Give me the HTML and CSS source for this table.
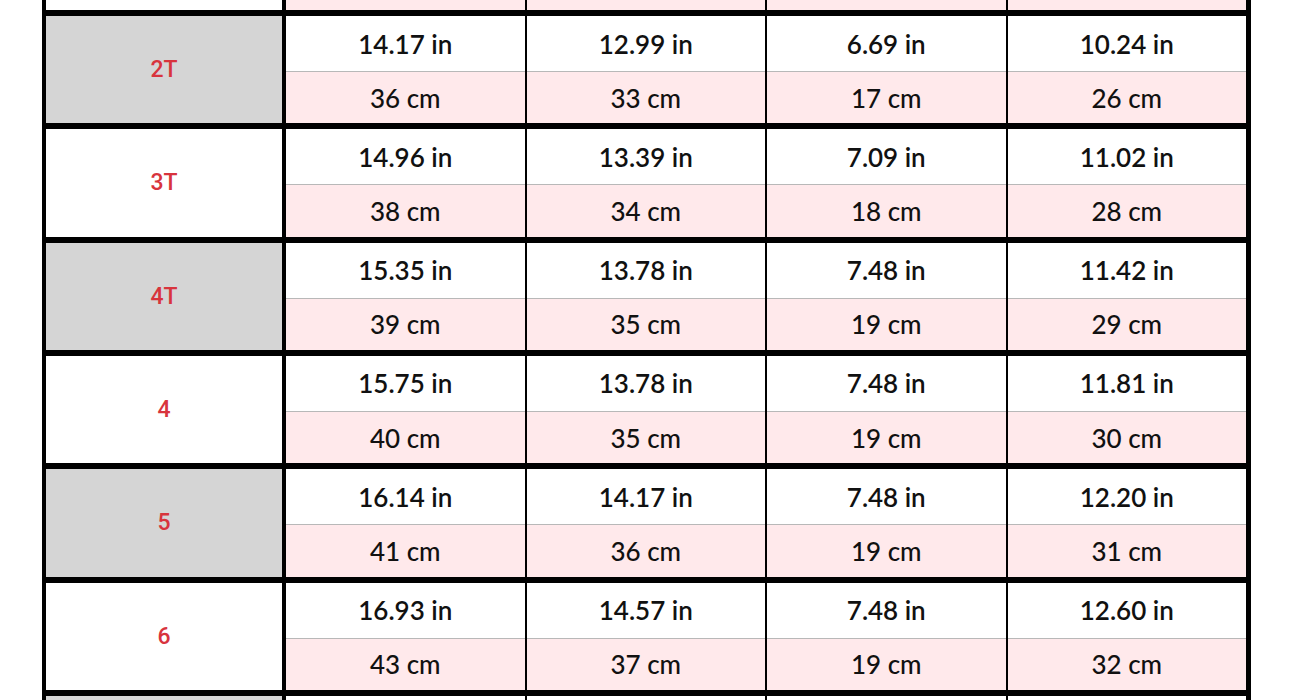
FILE: index.html
```html
<!DOCTYPE html>
<html lang="en">
<head>
<meta charset="utf-8">
<title>Size chart</title>
<link rel="stylesheet" href="styles.css">
</head>
<body>
<div class="chart">
  <div class="row">
    <div class="label"></div>
    <div class="data">
      <div class="cell"><div class="in"></div><div class="cm"></div></div>
      <div class="cell"><div class="in"></div><div class="cm"></div></div>
      <div class="cell"><div class="in"></div><div class="cm"></div></div>
      <div class="cell"><div class="in"></div><div class="cm"></div></div>
    </div>
  </div>
  <div class="row">
    <div class="label alt">2T</div>
    <div class="data">
      <div class="cell"><div class="in">14.17 in</div><div class="cm">36 cm</div></div>
      <div class="cell"><div class="in">12.99 in</div><div class="cm">33 cm</div></div>
      <div class="cell"><div class="in">6.69 in</div><div class="cm">17 cm</div></div>
      <div class="cell"><div class="in">10.24 in</div><div class="cm">26 cm</div></div>
    </div>
  </div>
  <div class="row">
    <div class="label">3T</div>
    <div class="data">
      <div class="cell"><div class="in">14.96 in</div><div class="cm">38 cm</div></div>
      <div class="cell"><div class="in">13.39 in</div><div class="cm">34 cm</div></div>
      <div class="cell"><div class="in">7.09 in</div><div class="cm">18 cm</div></div>
      <div class="cell"><div class="in">11.02 in</div><div class="cm">28 cm</div></div>
    </div>
  </div>
  <div class="row">
    <div class="label alt">4T</div>
    <div class="data">
      <div class="cell"><div class="in">15.35 in</div><div class="cm">39 cm</div></div>
      <div class="cell"><div class="in">13.78 in</div><div class="cm">35 cm</div></div>
      <div class="cell"><div class="in">7.48 in</div><div class="cm">19 cm</div></div>
      <div class="cell"><div class="in">11.42 in</div><div class="cm">29 cm</div></div>
    </div>
  </div>
  <div class="row">
    <div class="label">4</div>
    <div class="data">
      <div class="cell"><div class="in">15.75 in</div><div class="cm">40 cm</div></div>
      <div class="cell"><div class="in">13.78 in</div><div class="cm">35 cm</div></div>
      <div class="cell"><div class="in">7.48 in</div><div class="cm">19 cm</div></div>
      <div class="cell"><div class="in">11.81 in</div><div class="cm">30 cm</div></div>
    </div>
  </div>
  <div class="row">
    <div class="label alt">5</div>
    <div class="data">
      <div class="cell"><div class="in">16.14 in</div><div class="cm">41 cm</div></div>
      <div class="cell"><div class="in">14.17 in</div><div class="cm">36 cm</div></div>
      <div class="cell"><div class="in">7.48 in</div><div class="cm">19 cm</div></div>
      <div class="cell"><div class="in">12.20 in</div><div class="cm">31 cm</div></div>
    </div>
  </div>
  <div class="row">
    <div class="label">6</div>
    <div class="data">
      <div class="cell"><div class="in">16.93 in</div><div class="cm">43 cm</div></div>
      <div class="cell"><div class="in">14.57 in</div><div class="cm">37 cm</div></div>
      <div class="cell"><div class="in">7.48 in</div><div class="cm">19 cm</div></div>
      <div class="cell"><div class="in">12.60 in</div><div class="cm">32 cm</div></div>
    </div>
  </div>
  <div class="row">
    <div class="label alt"></div>
    <div class="data">
      <div class="cell"><div class="in"></div><div class="cm"></div></div>
      <div class="cell"><div class="in"></div><div class="cm"></div></div>
      <div class="cell"><div class="in"></div><div class="cm"></div></div>
      <div class="cell"><div class="in"></div><div class="cm"></div></div>
    </div>
  </div>
</div>
</body>
</html>
```
FILE: styles.css
```css
html, body {
  margin: 0;
  padding: 0;
  background: #fff;
  overflow: hidden;
}
body {
  height: 700px;
}
.chart {
  width: 1200px;
  margin: -97.33px 0 0 42px;
  padding: 0 5px 0 4px;
  background: #000;
  display: grid;
  row-gap: 6px;
  font-family: Lato, "Liberation Sans", sans-serif;
}
.row {
  display: grid;
  grid-template-columns: 236px 1fr;
  column-gap: 4px;
}
.label {
  background: #fff;
  color: #d8343d;
  font-family: Roboto, "Liberation Sans", sans-serif;
  font-weight: 500;
  font-size: 23px;
  display: flex;
  align-items: center;
  justify-content: center;
}
.label.alt {
  background: #d5d5d5;
}
.data {
  display: grid;
  grid-template-columns: repeat(4, 1fr);
  column-gap: 2px;
}
.cell {
  display: flex;
  flex-direction: column;
}
.in, .cm {
  display: flex;
  align-items: center;
  justify-content: center;
  color: #111;
  font-size: 26px;
}
.in {
  height: 55px;
  background: #fff;
  border-bottom: 1px solid #b8b8b8;
  font-weight: 600;
}
.cm {
  height: 51.33px;
  background: #ffe9eb;
  font-weight: 500;
}
```
